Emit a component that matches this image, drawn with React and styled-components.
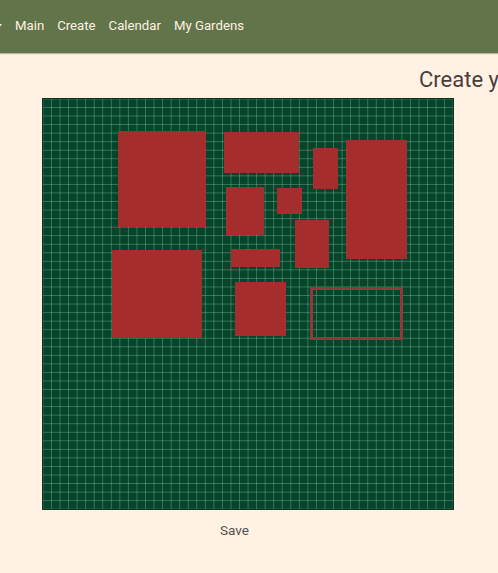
import styled, { createGlobalStyle } from "styled-components";

const beds = [
  { x: 76, y: 33, w: 88, h: 96 },
  { x: 182, y: 34, w: 75, h: 41 },
  { x: 184, y: 89, w: 38, h: 48 },
  { x: 235, y: 90, w: 25, h: 26 },
  { x: 271, y: 50, w: 25, h: 41 },
  { x: 304, y: 42, w: 61, h: 119 },
  { x: 253, y: 122, w: 34, h: 48 },
  { x: 70, y: 152, w: 90, h: 88 },
  { x: 189, y: 151, w: 49, h: 18 },
  { x: 193, y: 184, w: 51, h: 54 },
];

const App = () => {
  return (
    <Page>
      <GlobalStyle />
      <Header>
        <Caret />
        <NavLink>Main</NavLink>
        <NavLink>Create</NavLink>
        <NavLink>Calendar</NavLink>
        <NavLink>My Gardens</NavLink>
      </Header>
      <Title>Create your garden</Title>
      <Canvas>
        {beds.map((b, i) => (
          <Bed key={i} $x={b.x} $y={b.y} $w={b.w} $h={b.h} />
        ))}
        <Ghost />
      </Canvas>
      <SaveButton>Save</SaveButton>
    </Page>
  );
};

const GlobalStyle = createGlobalStyle`
  html, body {
    margin: 0;
    height: 100%;
    overflow: hidden;
    background-color: #fff2e4;
    font-family: "Roboto", "Liberation Sans", sans-serif;
  }
`;

const Page = styled.div`
  width: 498px;
  height: 573px;
  overflow: hidden;
  background-color: #fff2e4;
`;

const Header = styled.nav`
  display: flex;
  align-items: center;
  gap: 13px;
  height: 53px;
  padding-bottom: 1px;
  box-sizing: border-box;
  background-color: #62744a;
  box-shadow: 0 1px 1px rgba(60, 70, 40, 0.35);
`;

const Caret = styled.span`
  width: 0;
  height: 0;
  margin-left: -4px;
  border-left: 3px solid transparent;
  border-right: 3px solid transparent;
  border-top: 4px solid #fff2e4;
`;

const NavLink = styled.a`
  font-size: 13.2px;
  line-height: 20px;
  white-space: nowrap;
  color: #fff2e4;
`;

const Title = styled.h2`
  margin: 14px 0 6px 419px;
  font-size: 22px;
  line-height: 25px;
  font-weight: 400;
  white-space: nowrap;
  color: #4b3b3b;
`;

const Canvas = styled.div`
  position: relative;
  width: 412px;
  height: 412px;
  margin-left: 42px;
  box-sizing: border-box;
  border: 1px solid #16301f;
  background-color: #04452c;
  background-image:
    linear-gradient(to right, rgba(160, 200, 165, 0.36) 1px, transparent 1px),
    linear-gradient(to bottom, rgba(160, 200, 165, 0.36) 1px, transparent 1px);
  background-size: 8.56px 8.56px;
  background-position: 8px 8px;
`;

const Bed = styled.div`
  position: absolute;
  left: ${(p) => p.$x - 1}px;
  top: ${(p) => p.$y - 1}px;
  width: ${(p) => p.$w}px;
  height: ${(p) => p.$h}px;
  background-color: #a52d2d;
`;

const Ghost = styled.div`
  position: absolute;
  left: 267px;
  top: 188px;
  width: 93px;
  height: 53px;
  box-sizing: border-box;
  border: 3px solid #93383a;
`;

const SaveButton = styled.button`
  display: block;
  margin: 11px 0 0 220px;
  padding: 0;
  border: none;
  background: none;
  font-family: inherit;
  font-size: 13.6px;
  line-height: 18px;
  color: #55514e;
`;

export default App;
